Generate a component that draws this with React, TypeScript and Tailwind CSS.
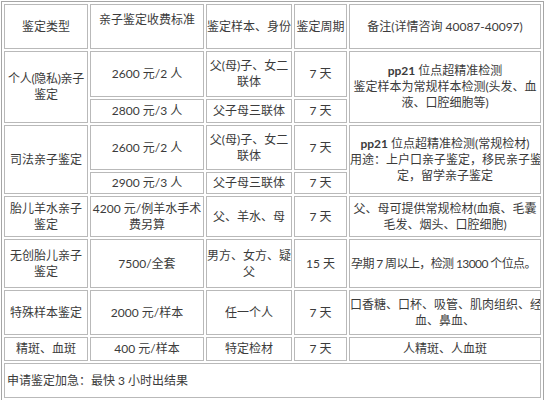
const cell = "border border-[#b9b9b9] text-center align-middle px-0 leading-[16px] whitespace-nowrap overflow-hidden";

export default function App() {
  return (
    <div className="w-[546px] h-[400px] bg-white pt-[1px] pl-[1px] text-[12px] text-[#3b3b3b] font-['Lato','Noto_Sans_CJK_SC',sans-serif]">
      <table className="table-fixed w-[543px] border-separate border-spacing-[2px] border border-[#a6a6a6]">
        <colgroup>
          <col className="w-[84px]" />
          <col className="w-[114px]" />
          <col className="w-[86px]" />
          <col className="w-[53px]" />
          <col />
        </colgroup>
        <tbody>
          <tr className="h-[45px]">
            <td className={cell}>鉴定类型</td>
            <td className={`${cell} !align-top pt-[7px]`}>亲子鉴定收费标准</td>
            <td className={cell}>鉴定样本、身份</td>
            <td className={cell}>鉴定周期</td>
            <td className={cell}>备注(详情咨询 40087-40097)</td>
          </tr>
          <tr className="h-[46px]">
            <td className={`${cell} tracking-[-0.3px]`} rowSpan={2}>
              个人(隐私)亲子
              <br />
              鉴定
            </td>
            <td className={cell}>2600 元/2 人</td>
            <td className={cell}>
              父(母)子、女二
              <br />
              联体
            </td>
            <td className={cell}>7 天</td>
            <td className={cell} rowSpan={2}>
              <span className="font-bold">pp21</span> 位点超精准检测
              <br />
              鉴定样本为常规样本检测(头发、血
              <br />
              液、口腔细胞等)
            </td>
          </tr>
          <tr className="h-[24px]">
            <td className={cell}>2800 元/3 人</td>
            <td className={cell}>父子母三联体</td>
            <td className={cell}>7 天</td>
          </tr>
          <tr className="h-[45px]">
            <td className={cell} rowSpan={2}>司法亲子鉴定</td>
            <td className={cell}>2600 元/2 人</td>
            <td className={cell}>
              父(母)子、女二
              <br />
              联体
            </td>
            <td className={cell}>7 天</td>
            <td className={cell} rowSpan={2}>
              <span className="font-bold">pp21</span> 位点超精准检测(常规检材)
              <br />
              用途：上户口亲子鉴定，移民亲子鉴
              <br />
              定，留学亲子鉴定
            </td>
          </tr>
          <tr className="h-[22px]">
            <td className={cell}>2900 元/3 人</td>
            <td className={cell}>父子母三联体</td>
            <td className={cell}>7 天</td>
          </tr>
          <tr className="h-[41px]">
            <td className={cell}>
              胎儿羊水亲子
              <br />
              鉴定
            </td>
            <td className={cell}>
              4200 元/例羊水手术
              <br />
              费另算
            </td>
            <td className={cell}>父、羊水、母</td>
            <td className={cell}>7 天</td>
            <td className={cell}>
              父、母可提供常规检材(血痕、毛囊
              <br />
              毛发、烟头、口腔细胞)
            </td>
          </tr>
          <tr className="h-[49px]">
            <td className={cell}>
              无创胎儿亲子
              <br />
              鉴定
            </td>
            <td className={cell}>7500/全套</td>
            <td className={cell}>
              男方、女方、疑
              <br />
              父
            </td>
            <td className={cell}>15 天</td>
            <td className={`${cell} !text-left pl-[1px] tracking-[-0.6px]`}>孕期 7 周以上，检测 13000 个位点。</td>
          </tr>
          <tr className="h-[45px]">
            <td className={cell}>特殊样本鉴定</td>
            <td className={cell}>2000 元/样本</td>
            <td className={cell}>任一个人</td>
            <td className={cell}>7 天</td>
            <td className={cell}>
              口香糖、口杯、吸管、肌肉组织、经
              <br />
              血、鼻血、
            </td>
          </tr>
          <tr className="h-[24px]">
            <td className={cell}>精斑、血斑</td>
            <td className={cell}>400 元/样本</td>
            <td className={cell}>特定检材</td>
            <td className={cell}>7 天</td>
            <td className={cell}>人精斑、人血斑</td>
          </tr>
          <tr className="h-[35px]">
            <td className={`${cell} !text-left pl-[2px]`} colSpan={5}>
              申请鉴定加急：最快 3 小时出结果
            </td>
          </tr>
        </tbody>
      </table>
    </div>
  );
}
